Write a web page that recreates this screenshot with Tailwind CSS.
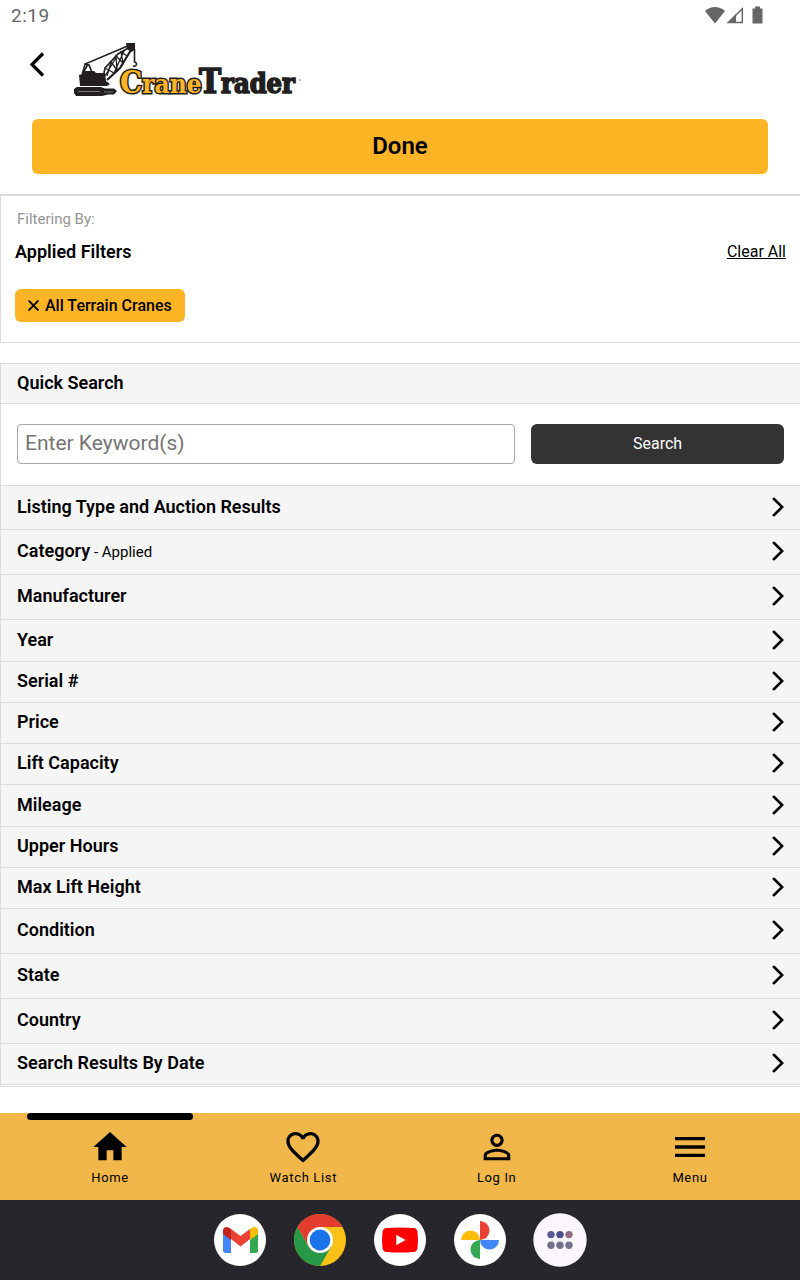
<!DOCTYPE html>
<html lang="en">
<head>
  <meta charset="UTF-8" />
  <meta name="viewport" content="width=device-width, initial-scale=1.0"/>
  <title>Filters - CraneTrader</title>
  <script src="https://cdn.jsdelivr.net/npm/@tailwindcss/browser@4"></script>
</head>
<body class="bg-white text-black font-['Roboto',sans-serif] flex flex-col min-h-screen">

  <!-- Shared icons -->
  <svg class="hidden" xmlns="http://www.w3.org/2000/svg">
    <symbol id="chevron" viewBox="0 0 12 20">
      <path d="M1.8 1.8 L10.2 10 L1.8 18.2" fill="none" stroke="#000" stroke-width="2.6" stroke-linecap="round" stroke-linejoin="miter"/>
    </symbol>
  </svg>

  <!-- Status bar -->
  <div class="flex items-center justify-between h-8 pl-[11px] pr-9 text-[#666]">
    <span class="text-[19px] leading-8 tracking-wide">2:19</span>
    <div class="flex items-center -mt-[2px]">
      <svg class="w-5 h-[18px]" viewBox="0 0 20 18" fill="#666"><path d="M10 17.500 L0 5 C3 2.300 6.500 1 10 1 C13.500 1 17 2.300 20 5 Z"/></svg>
      <svg class="w-[18px] h-[18px] ml-px" viewBox="0 0 18 18"><path d="M2.500 16.500 H16.300 V2.700 Z" fill="none" stroke="#666" stroke-width="1.400"/><path d="M1 17 L10 8 V17 Z" fill="#666"/></svg>
      <svg class="w-[11px] h-[18px] ml-2 mr-px" viewBox="0 0 11 18" fill="#666"><path d="M3 0.500 H8 V2.500 H10.500 V17.500 H0.500 V2.500 H3 Z"/></svg>
    </div>
  </div>

  <!-- Header -->
  <header class="px-8 pb-5">
    <div class="flex items-start pt-[10px]">
      <button type="button" aria-label="Back" class="-ml-1 mt-[9px]">
        <svg class="w-5 h-7" viewBox="0 0 20 28"><path d="M15 2.500 L4 13.500 L15 24.500" fill="none" stroke="#000" stroke-width="3.200"/></svg>
      </button>
      <a href="#" aria-label="CraneTrader" class="ml-[26px]">
        <svg class="w-[232px] h-16" viewBox="0 0 232 64">
          <!-- Crane -->
          <g fill="#231f20" stroke="#231f20">
            <path d="M3 45 H27 L31 46.500 H40 L43 49 L40 52.500 H34 L28 54 H2 L0 51 V47 Z" stroke="none"/>
            <path d="M5 33 L9 32 V29 H20 L22 31 H31 L32 39 L36 42 L33 44 H6 Z" stroke="none"/>
            <path d="M52 1 H61 V8 L57 10 L53 7 Z" stroke="none"/>
            <path d="M8 33 L11 22 L56 3" fill="none" stroke-width="1.500"/>
            <path d="M11 22 L15 23 L19 33 M14 22 L9 31" fill="none" stroke-width="1.700"/>
            <path d="M30 31 L31 26 L44 12 L56 5" fill="none" stroke-width="1.600"/>
            <path d="M33 38 L46 26 L57 8" fill="none" stroke-width="2.200"/>
            <path d="M31 26 L40 31 M33 34 L37 20 L43 28 L42 14 L49 21 L47 10 L53 14 M31 34 L43 14 M40 31 L50 9" fill="none" stroke-width="1.300"/>
            <path d="M60.500 7 V18 M60.500 17 V20 C64 21 62.500 25 59 24" fill="none" stroke-width="1.600"/>
          </g>
          <path d="M4 49.500 H26 M30 50 H39" stroke="#777" stroke-width="1"/>
          <text x="46" y="51" font-family="DejaVu Serif Condensed, DejaVu Serif, serif" font-weight="bold" font-size="26" fill="#fdb525" stroke="#231f20" stroke-width="3" stroke-linejoin="miter" paint-order="stroke"><tspan font-size="31">C</tspan>rane</text>
          <text x="125" y="51" font-family="DejaVu Serif Condensed, DejaVu Serif, serif" font-weight="bold" font-size="27" fill="#231f20" stroke="#231f20" stroke-width="1.600"><tspan font-size="33">T</tspan>rader</text>
          <circle cx="226" cy="38" r="0.800" fill="#777"/>
        </svg>
      </a>
    </div>
    <button type="button" class="block w-full h-[55px] mt-[13px] pb-[2px] rounded-md bg-[#fdb525] text-2xl font-semibold">Done</button>
  </header>

  <!-- Applied filters -->
  <section class="border-t-2 border-l border-b border-[#dcdcdc] px-[14px] pt-[11px] pb-5">
    <p class="text-[15px] leading-6 text-[#949494] px-[2px]">Filtering By:</p>
    <div class="flex items-center justify-between mt-[9px] leading-6">
      <h2 class="text-lg leading-6 font-semibold">Applied Filters</h2>
      <a href="#" class="text-base underline">Clear All</a>
    </div>
    <button type="button" class="flex items-center gap-[6px] h-[33px] mt-[25px] px-[13px] rounded-md bg-[#fdb525] text-base font-medium">
      <svg class="w-[11px] h-[11px]" viewBox="0 0 10 10"><path d="M0.500 0.500 L9.500 9.500 M9.500 0.500 L0.500 9.500" stroke="#000" stroke-width="1.700"/></svg>
      All Terrain Cranes
    </button>
  </section>

  <!-- Search filters -->
  <section class="mt-5 border-t border-l border-b border-[#dcdcdc] pb-px text-lg font-semibold">
    <h2 class="h-10 px-4 leading-[38px] bg-[#f5f5f5] border-b border-[#dcdcdc]">Quick Search</h2>
    <form class="grid grid-cols-[65fr_33fr] gap-4 px-4 pt-5 pb-[21px]">
      <input type="text" aria-label="Enter Keyword(s)" placeholder="Enter Keyword(s)" class="w-full h-10 px-[7px] pb-[2px] rounded-sm border border-[#a9a9a9] text-[21px] font-normal placeholder:text-[#757575]" />
      <button type="button" class="h-10 rounded-md bg-[#333] text-white text-base font-normal">Search</button>
    </form>
    <div class="border-b border-[#dcdcdc]">
      <button type="button" class="flex w-full h-11 items-center justify-between pl-4 pr-4 pb-[2px] bg-[#f5f5f5] border-t border-[#dcdcdc]">Listing Type and Auction Results <svg class="w-3 h-5"><use href="#chevron"/></svg></button>
      <button type="button" class="flex w-full h-[45px] items-center justify-between pl-4 pr-4 pb-[2px] bg-[#f5f5f5] border-t border-[#dcdcdc]"><span>Category<span class="text-[15px] font-normal"> - Applied</span></span> <svg class="w-3 h-5"><use href="#chevron"/></svg></button>
      <button type="button" class="flex w-full h-[45px] items-center justify-between pl-4 pr-4 pb-[2px] bg-[#f5f5f5] border-t border-[#dcdcdc]">Manufacturer <svg class="w-3 h-5"><use href="#chevron"/></svg></button>
      <button type="button" class="flex w-full h-[42px] items-center justify-between pl-4 pr-4 pb-[2px] bg-[#f5f5f5] border-t border-[#dcdcdc]">Year <svg class="w-3 h-5"><use href="#chevron"/></svg></button>
      <button type="button" class="flex w-full h-[41px] items-center justify-between pl-4 pr-4 pb-[2px] bg-[#f5f5f5] border-t border-[#dcdcdc]">Serial # <svg class="w-3 h-5"><use href="#chevron"/></svg></button>
      <button type="button" class="flex w-full h-[41px] items-center justify-between pl-4 pr-4 pb-[2px] bg-[#f5f5f5] border-t border-[#dcdcdc]">Price <svg class="w-3 h-5"><use href="#chevron"/></svg></button>
      <button type="button" class="flex w-full h-[41px] items-center justify-between pl-4 pr-4 pb-[2px] bg-[#f5f5f5] border-t border-[#dcdcdc]">Lift Capacity <svg class="w-3 h-5"><use href="#chevron"/></svg></button>
      <button type="button" class="flex w-full h-[42px] items-center justify-between pl-4 pr-4 pb-[2px] bg-[#f5f5f5] border-t border-[#dcdcdc]">Mileage <svg class="w-3 h-5"><use href="#chevron"/></svg></button>
      <button type="button" class="flex w-full h-[41px] items-center justify-between pl-4 pr-4 pb-[2px] bg-[#f5f5f5] border-t border-[#dcdcdc]">Upper Hours <svg class="w-3 h-5"><use href="#chevron"/></svg></button>
      <button type="button" class="flex w-full h-[41px] items-center justify-between pl-4 pr-4 pb-[2px] bg-[#f5f5f5] border-t border-[#dcdcdc]">Max Lift Height <svg class="w-3 h-5"><use href="#chevron"/></svg></button>
      <button type="button" class="flex w-full h-[45px] items-center justify-between pl-4 pr-4 pb-[2px] bg-[#f5f5f5] border-t border-[#dcdcdc]">Condition <svg class="w-3 h-5"><use href="#chevron"/></svg></button>
      <button type="button" class="flex w-full h-[45px] items-center justify-between pl-4 pr-4 pb-[2px] bg-[#f5f5f5] border-t border-[#dcdcdc]">State <svg class="w-3 h-5"><use href="#chevron"/></svg></button>
      <button type="button" class="flex w-full h-[45px] items-center justify-between pl-4 pr-4 pb-[2px] bg-[#f5f5f5] border-t border-[#dcdcdc]">Country <svg class="w-3 h-5"><use href="#chevron"/></svg></button>
      <button type="button" class="flex w-full h-[41px] items-center justify-between pl-4 pr-4 pb-[2px] bg-[#f5f5f5] border-t border-[#dcdcdc]">Search Results By Date <svg class="w-3 h-5"><use href="#chevron"/></svg></button>
    </div>
  </section>

  <!-- Bottom tabs -->
  <nav class="mt-auto flex justify-between px-[27px] h-[87px] bg-[#f1b74a] text-[13px] leading-4 tracking-wider">
    <a href="#" class="relative flex flex-col items-center gap-[3px] w-[166px] pt-[14px]">
      <span class="absolute top-0 inset-x-0 h-[7px] rounded-sm bg-black"></span>
      <svg class="w-10 h-10" viewBox="0 0 24 24"><path d="M10 20v-6h4v6h5v-8h3L12 3 2 12h3v8z"/></svg>
      <span>Home</span>
    </a>
    <a href="#" class="flex flex-col items-center gap-[3px] w-[166px] pt-[14px]">
      <svg class="w-10 h-10" viewBox="0 0 24 24"><path d="M16.500 3c-1.740 0-3.410.810-4.500 2.090C10.910 3.810 9.240 3 7.500 3 4.420 3 2 5.420 2 8.500c0 3.780 3.400 6.860 8.550 11.540L12 21.350l1.450-1.320C18.600 15.360 22 12.280 22 8.500 22 5.420 19.580 3 16.500 3zm-4.400 15.550l-.1.100-.1-.1C7.140 14.240 4 11.390 4 8.500 4 6.500 5.500 5 7.500 5c1.540 0 3.040.990 3.570 2.360h1.870C13.460 5.990 14.960 5 16.500 5c2 0 3.500 1.500 3.500 3.500 0 2.890-3.140 5.740-7.900 10.050z"/></svg>
      <span>Watch List</span>
    </a>
    <a href="#" class="flex flex-col items-center gap-[3px] w-[166px] pt-[14px]">
      <svg class="w-10 h-10" viewBox="0 0 24 24"><path d="M12 5.900c1.160 0 2.100.940 2.100 2.100s-.940 2.100-2.100 2.100S9.900 9.160 9.900 8s.940-2.100 2.100-2.100m0 9c2.970 0 6.100 1.460 6.100 2.100v1.100H5.900V17c0-.640 3.130-2.100 6.100-2.100M12 4C9.790 4 8 5.790 8 8s1.790 4 4 4 4-1.790 4-4-1.790-4-4-4zm0 9c-2.670 0-8 1.340-8 4v3h16v-3c0-2.660-5.330-4-8-4z"/></svg>
      <span>Log In</span>
    </a>
    <a href="#" class="flex flex-col items-center gap-[3px] w-[166px] pt-[14px]">
      <svg class="w-10 h-10" viewBox="0 0 24 24"><path d="M3 18h18v-2H3v2zm0-5h18v-2H3v2zm0-7v2h18V6H3z"/></svg>
      <span>Menu</span>
    </a>
  </nav>

  <!-- Dock -->
  <div class="flex items-center justify-center gap-7 h-20 bg-[#26262b]">
    <button type="button" aria-label="Gmail">
      <svg class="w-[52px] h-[52px]" viewBox="0 0 52 52">
        <circle cx="26" cy="26" r="26" fill="#fff"/>
        <path d="M9 19 L17 25 V39 H11.500 Q9 39 9 36.500 Z" fill="#4285f4"/>
        <path d="M44 19 L36 25 V39 H41.500 Q44 39 44 36.500 Z" fill="#34a853"/>
        <path d="M17 15 L26.500 22 L36 15 V25 L26.500 32.500 L17 25 Z" fill="#ea4335"/>
        <path d="M36 15 L38 13.700 Q41 12 43 14 Q44 15 44 17 V20 L36 26 Z" fill="#fbbc04"/>
        <path d="M17 15 L15 13.700 Q12 12 10 14 Q9 15 9 17 V20 L17 26 Z" fill="#c5221f"/>
      </svg>
    </button>
    <button type="button" aria-label="Chrome">
      <svg class="w-[52px] h-[52px]" viewBox="0 0 52 52">
        <circle cx="26" cy="26" r="26" fill="#fbc116"/>
        <path d="M3.500 13 A26 26 0 0 0 26 52 L37.300 32.500 L14.700 32.500 Z" fill="#279847"/>
        <path d="M3.500 13 A26 26 0 0 1 48.500 13 H26 L14.700 32.500 Z" fill="#e33b2e"/>
        <circle cx="26" cy="26" r="13" fill="#fff"/>
        <circle cx="26" cy="26" r="10.400" fill="#1a73e8"/>
      </svg>
    </button>
    <button type="button" aria-label="YouTube">
      <svg class="w-[52px] h-[52px]" viewBox="0 0 52 52">
        <circle cx="26" cy="26" r="26" fill="#fff"/>
        <path d="M12.500 14 Q26 13 39.500 14 Q43 14.300 43.500 18 Q44.500 26 43.500 34 Q43 37.700 39.500 38 Q26 39 12.500 38 Q9 37.700 8.500 34 Q7.500 26 8.500 18 Q9 14.300 12.500 14 Z" fill="#f00"/>
        <path d="M22.300 20.700 L31.500 26 L22.300 31.300 Z" fill="#fff"/>
      </svg>
    </button>
    <button type="button" aria-label="Photos">
      <svg class="w-[52px] h-[52px]" viewBox="0 0 52 52">
        <circle cx="26" cy="26" r="26" fill="#fff"/>
        <path d="M26 7 A9.500 9.500 0 0 1 26 26 Z" fill="#ea4335"/>
        <path d="M45 26 A9.500 9.500 0 0 1 26 26 Z" fill="#4285f4"/>
        <path d="M26 45 A9.500 9.500 0 0 1 26 26 Z" fill="#34a853"/>
        <path d="M7 26 A9.500 9.500 0 0 1 26 26 Z" fill="#fbbc04"/>
      </svg>
    </button>
    <button type="button" aria-label="All apps" class="-mx-px">
      <svg class="w-[54px] h-[54px]" viewBox="0 0 54 54">
        <circle cx="27" cy="27" r="26.700" fill="#fcf7fd"/>
        <g fill="#74728a">
          <circle cx="18" cy="21.600" r="3.700" fill="#585b96"/>
          <circle cx="27" cy="21.600" r="3.700" fill="#4b4f89"/>
          <circle cx="36" cy="21.600" r="3.700" fill="#936b85"/>
          <circle cx="18" cy="32.200" r="3.700"/>
          <circle cx="27" cy="32.200" r="3.700"/>
          <circle cx="36" cy="32.200" r="3.700"/>
        </g>
      </svg>
    </button>
  </div>

</body>
</html>
